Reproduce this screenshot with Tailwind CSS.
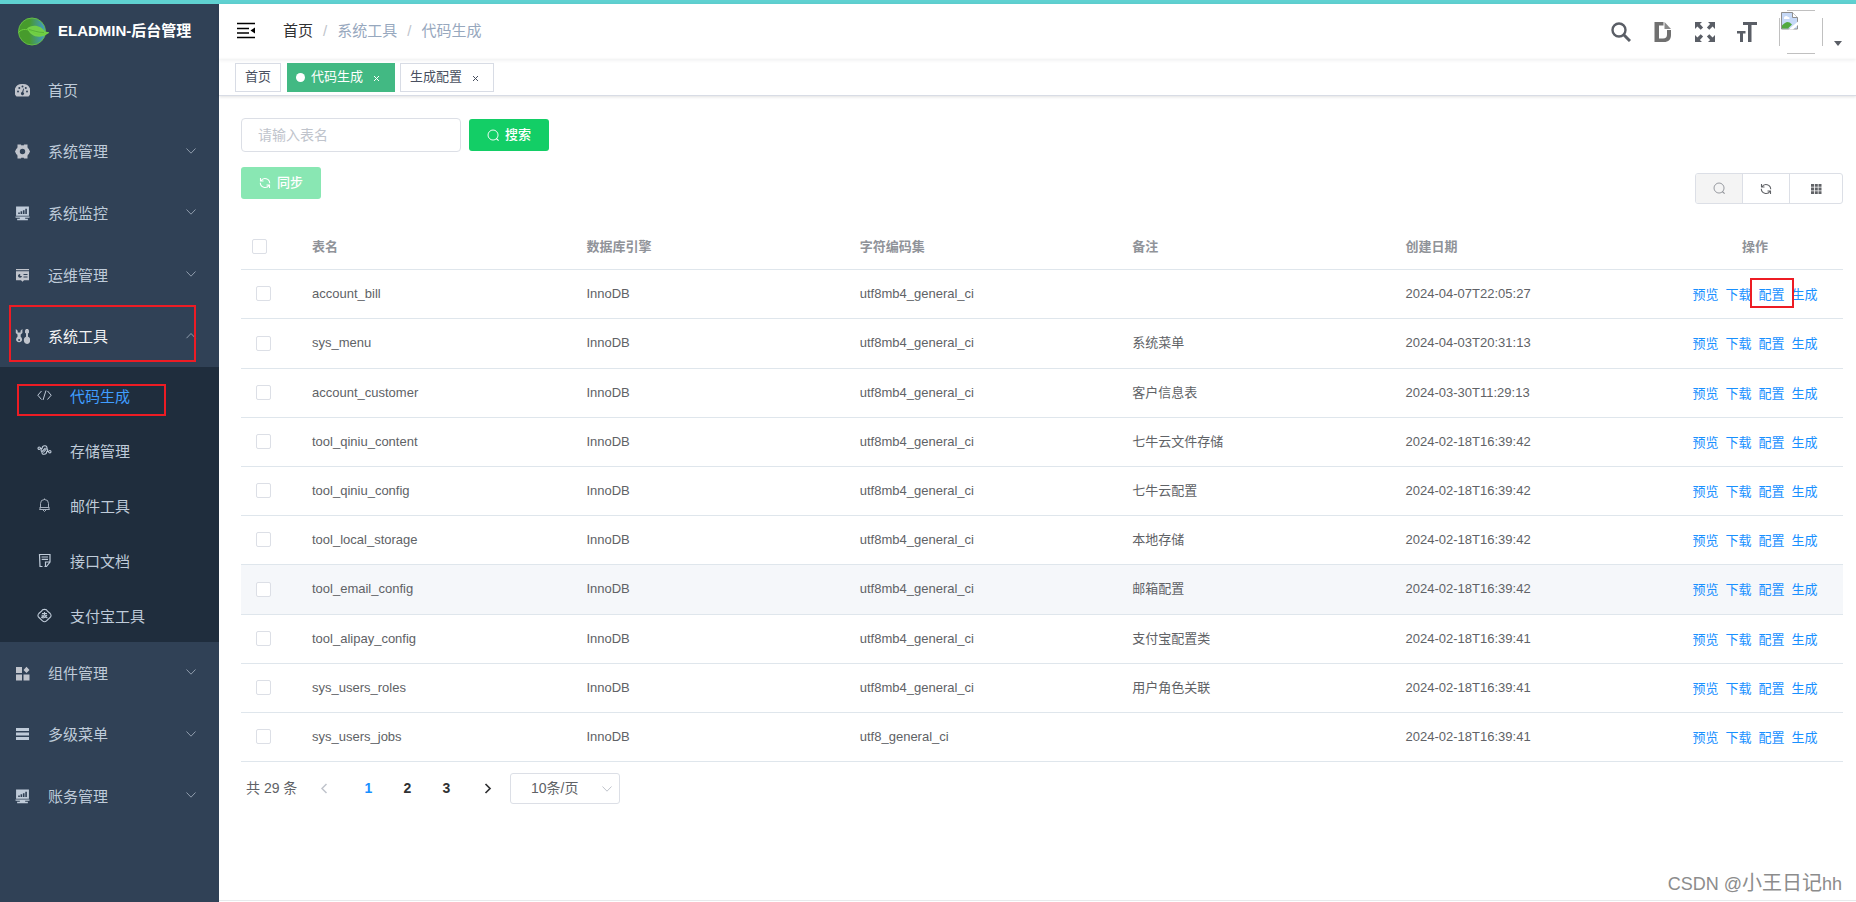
<!DOCTYPE html>
<html lang="zh-CN">
<head>
<meta charset="utf-8">
<title>代码生成 - ELADMIN</title>
<script src="https://cdn.jsdelivr.net/npm/@tailwindcss/browser@4"></script>
</head>
<body class="bg-white font-['Liberation_Sans','Noto_Sans_CJK_SC',sans-serif] text-[13px] text-[#606266]">
<svg class="hidden" aria-hidden="true">
  <symbol id="down" viewBox="0 0 12 12"><path d="M1.5 3.5L6 8.2l4.500-4.700" fill="none" stroke="currentColor"/></symbol>
  <symbol id="up" viewBox="0 0 12 12"><path d="M1.500 8.200L6 3.500l4.500 4.700" fill="none" stroke="currentColor"/></symbol>
  <symbol id="search" viewBox="0 0 14 14"><circle cx="6.500" cy="6.500" r="5.400" fill="none" stroke="currentColor"/><path d="M10 10.200l2.500 2.300" fill="none" stroke="currentColor" stroke-width="1.200"/></symbol>
  <symbol id="refresh" viewBox="0 0 12 12"><path d="M2 3.800A4.700 4.700 0 0 1 10.700 6.200M1.500 1v3h3M1.300 5.800A4.700 4.700 0 0 0 10 8.200M10.500 11V8h-3" fill="none" stroke="currentColor" stroke-width="1.100"/></symbol>
  <symbol id="monitor" viewBox="0 0 14 14"><path fill="currentColor" fill-rule="evenodd" d="M1 .500h12v8.500H1zM3 6h1.500v1.500H3zM5.200 5h1.500v2.500H5.200zM7.400 4h1.500v3.500H7.400zM9.600 2.500h1.500v5H9.600zM.500 9.800h13V11h-4v1H12v1.200H2V12h2.500v-1h-4z"/></symbol>
</svg>
<div class="flex min-h-screen flex-col">
  <div class="h-1 shrink-0 bg-[#5fd1d1]"></div>
  <div class="flex flex-1">
    <aside class="w-[219px] shrink-0 bg-[#304156] text-[15px] text-[#bfcbd9]">
      <a href="#" class="flex h-[55px] items-center gap-[9px] pl-[17px] text-[15px] font-bold text-white">
        <svg class="size-8 shrink-0" viewBox="0 0 32 32"><defs><linearGradient id="lg"><stop offset=".4" stop-color="#479b2c"/><stop offset="1" stop-color="#4396cf"/></linearGradient></defs><circle cx="15" cy="15.500" r="13.500" fill="url(#lg)" stroke="#65bd45"/><path d="M10 12.500c5-5 15-3 18 3l5 1c-3 1-5 4-9 4-6 1-11-2-14-8z" fill="#72ce48"/><path d="M1.500 16.500c4-5 10-3 14-.500s8 3.500 14 1" fill="none" stroke="#6bcf3d"/><path d="M12 13.500c4 1 9 3 15 3" fill="none" stroke="#4ca531" stroke-width=".7"/></svg>
        <span class="whitespace-nowrap">ELADMIN-后台管理</span>
      </a>
      <nav>
        <a href="#" class="flex h-[62px] items-center gap-[18px] pl-[15px]">
          <svg class="size-[15px] text-[#c0c4cc]" viewBox="0 0 15 15"><path fill="currentColor" d="M7.500 1A7.400 7.400 0 0 0 1.500 13.500h12A7.400 7.400 0 0 0 7.500 1z"/><g fill="#304156"><circle cx="3" cy="8.500" r="1"/><circle cx="4.300" cy="5" r="1"/><circle cx="7.500" cy="3.400" r="1"/><circle cx="10.800" cy="5" r="1"/><circle cx="12" cy="8.500" r="1"/><path d="M8.300 5.500l.7.200-.7 3.500a1.600 1.600 0 1 1-1.200-.200z"/></g></svg><span class="pt-[2px]">首页</span></a>
        <a href="#" class="flex h-[61px] items-center gap-[18px] pr-[22px] pl-[15px]">
          <svg class="size-[15px] text-[#c0c4cc]" viewBox="0 0 15 15"><path fill="none" stroke="currentColor" stroke-width="3.600" d="M7.500 3a4.500 4.500 0 1 0 0 9 4.500 4.500 0 0 0 0-9z"/><path fill="currentColor" d="M2.500.6h3.500l1 2.400-4.500 2zM12.500.6H9L8 3l4.500 2zM2.500 14.400h3.500l1-2.400-4.500-2zM12.500 14.400H9L8 12l4.500-2zM0 7.500l1.500-3 2 1v4l-2 1zM15 7.500l-1.500-3-2 1v4l2 1z"/></svg><span class="flex-1 pt-[2px]">系统管理</span><svg class="mb-[2px] size-[12px] text-[#909dad]"><use href="#down"/></svg></a>
        <a href="#" class="flex h-[62px] items-center gap-[18px] pr-[22px] pl-[15px]">
          <svg class="size-[15px]"><use href="#monitor"/></svg><span class="flex-1 pt-[2px]">系统监控</span><svg class="mb-[2px] size-[12px] text-[#909dad]"><use href="#down"/></svg></a>
        <a href="#" class="flex h-[62px] items-center gap-[18px] pr-[22px] pl-[15px]">
          <svg class="size-[15px] text-[#c0c4cc]" viewBox="0 0 15 15"><path fill="currentColor" fill-rule="evenodd" d="M1 1h13v1.300H1zM1 3.200h13v9H9l-1.500 1.500L6 12.200H1zM3 7.500a2 2 0 0 0 4 .500H5.200V6A2 2 0 0 0 3 7.500zM8.500 6h4v1h-4zM8.500 8.500h4v1h-4z"/></svg><span class="flex-1 pt-[2px]">运维管理</span><svg class="mb-[2px] size-[12px] text-[#909dad]"><use href="#down"/></svg></a>
        <a href="#" class="relative flex h-[61px] items-center gap-[18px] pr-[22px] pl-[15px] text-[#f4f4f5]">
          <svg class="size-[15px] text-[#c0c4cc]" viewBox="0 0 15 15"><path fill="currentColor" fill-rule="evenodd" d="M.800 0v4l1.700 1.600v2.200A3 3 0 1 0 5.700 7.800V5.600L7.400 4V0L5.500 1.800v1.700H2.700V1.800zM4.100 10a1 1 0 1 1 0 2 1 1 0 0 1 0-2zM11 0h2l1 1.500v2.300l-1 .700v3.300c3.300.7 2.800 7.200-1 7.200s-4.300-6.500-1-7.200V4.500l-1-.700V1.500z"/></svg><span class="flex-1 pt-[2px]">系统工具</span><svg class="mb-[2px] size-[12px] text-[#909dad]"><use href="#up"/></svg>
          <span class="absolute -top-px left-[9px] h-[57px] w-[187px] border-2 border-[#ed1c24]"></span></a>
        <div class="bg-[#1f2d3d]">
          <a href="#" class="relative flex h-[55px] items-center gap-[18px] pt-[2px] pl-[37px] text-[#409eff]">
            <svg class="size-[15px] text-[#bfcbd9]" viewBox="0 0 15 15"><path fill="none" stroke="currentColor" d="M4.500 3L.8 7.200l3.700 4.300M10.500 3l3.700 4.200-3.700 4.300M9 2.500L6 12"/></svg><span class="pt-1">代码生成</span>
            <span class="absolute top-[17px] left-[17px] h-8 w-[149px] border-2 border-[#ed1c24]"></span></a>
          <a href="#" class="flex h-[55px] items-center gap-[18px] pt-[2px] pl-[37px]">
            <svg class="size-[15px]" viewBox="0 0 15 15"><g fill="none" stroke="currentColor" stroke-width="1.100"><path d="M3 5.500h2C5.500 1.500 11 2.200 9.800 5.500L6.300 9.500M12 8.500H9.800C9.500 12.500 4 12 5 8.500L8.500 5M5 5.500C3.500 6.500 4 8.500 5 8.500M9.800 5.500c1.200.5 1.200 2 0 3"/><circle cx="2.200" cy="5.200" r="1.200"/><circle cx="12.800" cy="8.700" r="1.200"/></g></svg><span class="pt-1">存储管理</span></a>
          <a href="#" class="flex h-[55px] items-center gap-[18px] pt-[2px] pl-[37px]">
            <svg class="size-[15px] text-[#a4aebb]" viewBox="0 0 15 15"><path fill="none" stroke="currentColor" d="M3.500 9.500V5.500a4 4 0 0 1 8 0v4M2.500 9.500h10M3.500 9.500l-1 2h10l-1-2M6 12l1.500 1.500L9 12M7.500 2V.500"/></svg><span class="pt-1">邮件工具</span></a>
          <a href="#" class="flex h-[55px] items-center gap-[18px] pt-[2px] pl-[37px]">
            <svg class="size-[15px]" viewBox="0 0 15 15"><path fill="none" stroke="currentColor" stroke-width="1.200" d="M5.500 13.500H3L2.500 1.500h10.500V9L9.500 13.500H7.500M8.500 13V9h4.500M4.500 4h6.500M4.700 6.300h6.300"/></svg><span class="pt-1">接口文档</span></a>
          <a href="#" class="flex h-[55px] items-center gap-[18px] pt-[2px] pl-[37px]">
            <svg class="size-[15px]" viewBox="0 0 15 15"><path fill="none" stroke="currentColor" stroke-width="1.100" d="M4.500 3.200C5.500.8 9.500.8 10.500 3.200L13.200 5.500C14.500 7 14.200 8.500 13 9.500L9.500 12.800C8.200 14 6.800 14 5.500 12.800L2 9.500C.8 8.500.5 7 1.800 5.500zM5 5.500h5M7.500 4v3M4.500 7.200h5.200C9 9.500 7 10 5.300 9.800 3.500 9.500 5 7 10.500 10"/></svg><span class="pt-1">支付宝工具</span></a>
        </div>
        <a href="#" class="flex h-[62px] items-center gap-[18px] pr-[22px] pl-[15px]">
          <svg class="size-[15px] text-[#c0c4cc]" viewBox="0 0 15 15"><path fill="currentColor" d="M1 1h6v6H1zM1 8.500h6v6H1zM8.500 8.500h6v6h-6zM11.500.7l3 3.200-3 3.200-3-3.200z"/></svg><span class="flex-1 pt-[2px]">组件管理</span><svg class="mb-[2px] size-[12px] text-[#909dad]"><use href="#down"/></svg></a>
        <a href="#" class="flex h-[61px] items-center gap-[18px] pr-[22px] pl-[15px]">
          <svg class="size-[15px]" viewBox="0 0 15 15"><path fill="currentColor" d="M1 1h13v3H1zM1 5.500h13v3H1zM1 10h13v3H1z"/></svg><span class="flex-1 pt-[2px]">多级菜单</span><svg class="mb-[2px] size-[12px] text-[#909dad]"><use href="#down"/></svg></a>
        <a href="#" class="flex h-[62px] items-center gap-[18px] pr-[22px] pl-[15px]">
          <svg class="size-[15px]"><use href="#monitor"/></svg><span class="flex-1 pt-[2px]">账务管理</span><svg class="mb-[2px] size-[12px] text-[#909dad]"><use href="#down"/></svg></a>
      </nav>
    </aside>

    <div class="flex min-w-0 flex-1 flex-col">
      <header class="relative flex h-[55px] items-center pr-[14px] pl-[18px] shadow-[0_1px_4px_rgba(0,21,41,0.08)]">
        <button aria-label="收起菜单" class="mr-7"><svg class="mb-[2px] block h-[17px] w-[18px] text-black" viewBox="0 0 18 17"><path fill="none" stroke="currentColor" stroke-width="1.400" d="M0 1.500h18M0 6.500h12M0 11h12M0 15.500h18"/><path fill="currentColor" d="M18 5.500v6l-4.500-3z"/></svg></button>
        <nav class="flex flex-1 items-center gap-[10px] text-[15px] text-[#97a8be]">
          <a href="#" class="text-[#303133]">首页</a><span class="text-[#c0c4cc]">/</span><span>系统工具</span><span class="text-[#c0c4cc]">/</span><span>代码生成</span>
        </nav>
        <div class="flex items-center gap-[22px] text-[#5a5e66]">
          <button aria-label="搜索"><svg class="block size-5" viewBox="0 0 20 20"><circle cx="8" cy="8" r="6.500" fill="none" stroke="currentColor" stroke-width="2.400"/><path d="M12.500 12.500l6.500 6.500" stroke="currentColor" stroke-width="3"/></svg></button>
          <button aria-label="文档"><svg class="block size-5" viewBox="0 0 20 20"><path fill="#707070" fill-rule="evenodd" d="M1.500 0h9v3.500H6v13h4c2.800 0 4-1.500 4-4V8h4v5c0 4.500-2.500 7-7 7H1.500z"/><path fill="#8a8a8a" d="M11.500 0L18 7h-6.500z"/></svg></button>
          <button aria-label="全屏"><svg class="block size-5" viewBox="0 0 20 20"><path fill="currentColor" d="M0 0h7L4.900 2.100l3.200 3.300-2.400 2.400L2.400 4.500 0 7zM20 0v7l-2.400-2.500-3.300 3.300-2.400-2.400 3.200-3.300L13 0zM0 20v-7l2.400 2.500 3.300-3.300 2.400 2.400-3.200 3.300L7 20zM20 20h-7l2.100-2.100-3.200-3.300 2.400-2.400 3.300 3.300L20 13z"/></svg></button>
          <button aria-label="字号"><svg class="block size-5" viewBox="0 0 20 20"><path fill="currentColor" d="M6 0h14v3h-5.500v17H11V3H6zM0 9h8.500v2.500H6V20H3v-8.500H0z"/></svg></button>
          <button aria-label="用户菜单" class="flex items-end gap-[11px] text-[#5a5e66]">
            <svg class="block size-11" viewBox="0 0 44 44"><path d="M8 .5h28M8 43.500h28M.5 8v28M43.500 8v28" stroke="#c0c0c0" fill="none"/><path d="M2.500 2.500h11l5 5v11.500h-16z" fill="#c6d9f7" stroke="#8f8f8f"/><path d="M13.500 2.500v5h5" fill="#fff" stroke="#8f8f8f"/><path d="M5 8c0-2 3-3 4-1 2 0 2 2 1 2H5z" fill="#fff"/><path d="M3 18.500v-3c4-4 6-5 10-1l-4 4z" fill="#53a93f"/><path d="M9.500 19.500l9.500-8v3.500l-5 4.500z" fill="#fff"/></svg>
            <svg class="mb-2 h-[5px] w-2" viewBox="0 0 8 5"><path fill="currentColor" d="M0 0h8L4 5z"/></svg>
          </button>
        </div>
      </header>
      <div class="flex h-[37px] items-center border-b border-[#d8dce5] pl-4 text-[13px] text-[#495060] shadow-[0_1px_3px_rgba(0,0,0,0.12)]">
        <a href="#" class="mr-[6px] flex h-[29px] items-center border border-[#d8dce5] bg-white px-[9px]">首页</a>
        <a href="#" class="mr-[5px] flex h-[29px] items-center border border-[#42b983] bg-[#42b983] pr-[14px] pl-2 text-white"><span class="mr-[6px] size-[9px] rounded-full bg-white"></span>代码生成<svg class="mt-[2px] ml-[10px] size-[7px]" viewBox="0 0 7 7"><path d="M1 1l5 5M6 1L1 6" stroke="currentColor"/></svg></a>
        <a href="#" class="flex h-[29px] items-center border border-[#d8dce5] bg-white pr-[14px] pl-[9px]">生成配置<svg class="mt-[2px] ml-[10px] size-[7px]" viewBox="0 0 7 7"><path d="M1 1l5 5M6 1L1 6" stroke="currentColor"/></svg></a>
      </div>

      <main class="flex-1 pt-[22px] pr-[13px] pl-[22px]">
        <div class="flex items-center gap-2">
          <input type="text" aria-label="表名" placeholder="请输入表名" class="h-[34px] w-[220px] rounded border border-[#dcdfe6] px-4 text-[14px] placeholder:text-[#c0c4cc]">
          <button class="flex h-8 w-20 items-center justify-center gap-[5px] rounded-[3px] bg-[#13ce66] font-medium text-white"><svg class="size-[13px]"><use href="#search"/></svg>搜索</button>
        </div>
        <div class="mt-[15px] flex items-start justify-between">
          <button disabled class="flex h-8 w-20 items-center justify-center gap-[6px] rounded-[3px] bg-[#89e7b3] font-medium text-white"><svg class="size-[12px]"><use href="#refresh"/></svg>同步</button>
          <div class="mt-[6px] flex h-[31px] overflow-hidden rounded-[3px] border border-[#dcdfe6]">
            <button aria-label="显示搜索" class="flex w-[47px] items-center justify-center border-r border-[#dcdfe6] bg-[#f4f4f4] text-[#909399]"><svg class="size-[13px]"><use href="#search"/></svg></button>
            <button aria-label="刷新" class="flex w-[47px] items-center justify-center border-r border-[#dcdfe6]"><svg class="size-[12px]"><use href="#refresh"/></svg></button>
            <button aria-label="列设置" class="flex w-[52px] items-center justify-center"><svg class="h-[10px] w-[11px]" viewBox="0 0 11 10"><path fill="currentColor" d="M0 0h3v2.800H0zM3.800 0h3v2.800h-3zM7.500 0h3v2.800h-3zM0 3.600h3v2.800H0zM3.800 3.600h3v2.800h-3zM7.500 3.600h3v2.800h-3zM0 7.200h3V10H0zM3.800 7.200h3V10h-3zM7.500 7.200h3V10h-3z"/></svg></button>
          </div>
        </div>
        <table class="mt-5 w-full table-fixed border-collapse">
          <colgroup><col class="w-[59px]"><col><col><col><col><col><col class="w-[176px]"></colgroup>
          <thead class="text-[#909399]">
            <tr class="h-[45px] border-b border-[#dfe6ec] text-left">
              <th class="pl-[11px]"><input type="checkbox" aria-label="全选" class="block size-[15px] appearance-none rounded-xs border border-[#dcdfe6]"></th>
              <th class="px-3">表名</th><th class="px-[13px]">数据库引擎</th><th class="px-[13px]">字符编码集</th><th class="px-3">备注</th><th class="px-3">创建日期</th><th class="text-center">操作</th>
            </tr>
          </thead>
          <tbody id="rows"></tbody>
        </table>
        <div class="mt-[11px] flex h-8 items-center pl-[5px] text-[14px]">
          <span class="w-[68px] whitespace-nowrap">共 29 条</span>
          <nav class="flex items-center font-bold text-[#303133]">
            <button aria-label="上一页" disabled class="flex w-[35px] justify-center pr-4 text-[#c0c4cc]"><svg class="h-[11px] w-2" viewBox="0 0 8 11"><path d="M6.500 1L2 5.500 6.500 10" fill="none" stroke="currentColor" stroke-width="1.500"/></svg></button>
            <button class="w-[39px] text-[#1890ff]">1</button><button class="w-[39px]">2</button><button class="w-[39px]">3</button>
            <button aria-label="下一页" class="flex w-[44px] justify-center"><svg class="h-[11px] w-2" viewBox="0 0 8 11"><path d="M1.500 1L6 5.500 1.500 10" fill="none" stroke="currentColor" stroke-width="1.700"/></svg></button>
          </nav>
          <div class="relative">
            <select aria-label="每页条数" class="block h-[31px] w-[110px] appearance-none rounded-[3px] border border-[#dcdfe6] bg-white pl-5 text-[14px]"><option>10条/页</option></select>
            <svg class="pointer-events-none absolute top-[10px] right-[7px] size-[12px] text-[#c0c4cc]"><use href="#down"/></svg>
          </div>
        </div>
      </main>
      <footer class="flex h-[2px] justify-end border-t border-[#e7eaec]">
        <div class="relative"><span class="absolute right-[14px] bottom-[2px] text-[18px] leading-8 whitespace-nowrap text-[#8c8c8c]">CSDN @<span class="text-[20px]">小王日记</span>hh</span></div>
      </footer>
    </div>
  </div>
</div>
<script>
const tables = [
  ['account_bill', 'utf8mb4_general_ci', '', '2024-04-07T22:05:27'],
  ['sys_menu', 'utf8mb4_general_ci', '系统菜单', '2024-04-03T20:31:13'],
  ['account_customer', 'utf8mb4_general_ci', '客户信息表', '2024-03-30T11:29:13'],
  ['tool_qiniu_content', 'utf8mb4_general_ci', '七牛云文件存储', '2024-02-18T16:39:42'],
  ['tool_qiniu_config', 'utf8mb4_general_ci', '七牛云配置', '2024-02-18T16:39:42'],
  ['tool_local_storage', 'utf8mb4_general_ci', '本地存储', '2024-02-18T16:39:42'],
  ['tool_email_config', 'utf8mb4_general_ci', '邮箱配置', '2024-02-18T16:39:42'],
  ['tool_alipay_config', 'utf8mb4_general_ci', '支付宝配置类', '2024-02-18T16:39:41'],
  ['sys_users_roles', 'utf8mb4_general_ci', '用户角色关联', '2024-02-18T16:39:41'],
  ['sys_users_jobs', 'utf8_general_ci', '', '2024-02-18T16:39:41'],
];
document.getElementById('rows').innerHTML = tables.map(([name, charset, remark, date], i) => `
  <tr class="${i === 1 || i === 6 ? 'h-[50px]' : 'h-[49px]'} border-b border-[#dfe6ec] ${i === 6 ? 'bg-[#f5f7fa]' : ''}">
    <td class="pl-[15px]"><input type="checkbox" aria-label="${name}" class="block size-[15px] appearance-none rounded-xs border border-[#dcdfe6] bg-white"></td>
    <td class="px-3">${name}</td><td class="px-[13px]">InnoDB</td><td class="px-[13px]">${charset}</td><td class="px-3">${remark}</td><td class="px-3">${date}</td>
    <td><div class="flex justify-center gap-[7px] pt-[2px] text-[#1890ff]"><a href="#">预览</a><a href="#">下载</a><span class="relative"><a href="#">配置</a>${i === 0 ? '<span class="pointer-events-none absolute -top-[7px] -left-[9px] h-[30px] w-[44px] border-2 border-[#ed1c24]"></span>' : ''}</span><a href="#">生成</a></div></td>
  </tr>`).join('');
</script>
</body>
</html>
